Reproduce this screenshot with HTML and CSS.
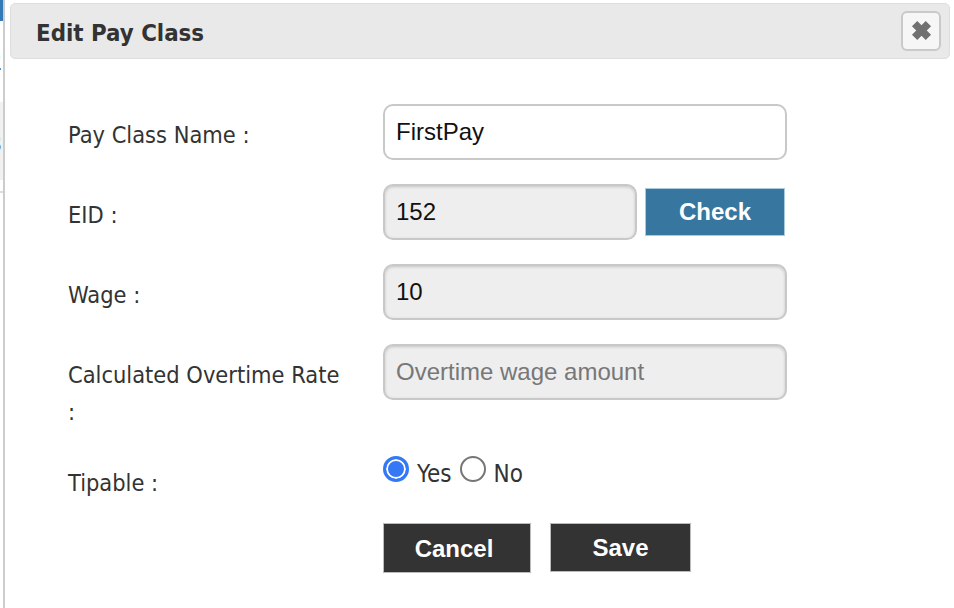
FILE: index.html
```html
<!DOCTYPE html>
<html lang="en">
<head>
<meta charset="utf-8">
<title>Edit Pay Class</title>
<link rel="stylesheet" href="styles.css">
</head>
<body>
<div class="backdrop">
  <div class="backdrop-bar"></div>
  <div class="backdrop-row one">2</div>
  <div class="backdrop-row two">3</div>
  <div class="backdrop-line"></div>
</div>
<section class="dialog">
  <header class="titlebar">
    <h1 class="title">Edit Pay Class</h1>
    <button class="close" type="button" aria-label="Close">
      <svg class="close-icon" viewBox="0 0 20 20" width="20" height="20"><path d="M4.5 4.5 15.5 15.5M15.5 4.5 4.5 15.5"/></svg>
    </button>
  </header>
  <form class="form">
    <label class="label">Pay Class Name :</label>
    <div class="field"><input class="input" type="text" value="FirstPay"></div>
    <label class="label">EID :</label>
    <div class="field eid">
      <input class="input short readonly" type="text" value="152" readonly>
      <button class="btn check" type="button">Check</button>
    </div>
    <label class="label">Wage :</label>
    <div class="field"><input class="input readonly" type="text" value="10" readonly></div>
    <label class="label">Calculated Overtime Rate :</label>
    <div class="field"><input class="input readonly" type="text" placeholder="Overtime wage amount" readonly></div>
    <label class="label tip">Tipable :</label>
    <div class="field radios">
      <input class="radio" type="radio" name="tip" checked><span class="radio-text">Yes</span>
      <input class="radio" type="radio" name="tip"><span class="radio-text">No</span>
    </div>
    <div></div>
    <div class="actions">
      <button class="btn dark cancel" type="button">Cancel</button>
      <button class="btn dark save" type="button">Save</button>
    </div>
  </form>
</section>
</body>
</html>
```
FILE: styles.css
```css
html, body { margin: 0; padding: 0; height: 100%; background: #fff; overflow: hidden; }
body { position: relative; width: 954px; height: 608px; font-family: "DejaVu Sans Condensed", "DejaVu Sans", sans-serif; color: #333; }
.backdrop { width: 3px; height: 608px; overflow: hidden; background: #fff; }
.backdrop-bar { height: 21px; background: #337ab7; }
.backdrop-row { font-family: "Noto Sans", sans-serif; font-size: 24px; width: 3px; text-indent: -12px; white-space: nowrap; }
.backdrop-row.one { height: 60px; padding-top: 21px; line-height: 38px; }
.backdrop-row.two { background: #f1f1f1; height: 78px; line-height: 82px; }
.backdrop-line { height: 2px; margin-top: 11px; background: #ddd; }
.dialog { position: absolute; left: 3px; top: 0; width: 951px; height: 608px; background: #fff; border-left: 2px solid #ccc; box-sizing: border-box; padding: 3px 4px 0 5px; }
.titlebar { display: flex; align-items: center; justify-content: space-between; height: 56px; box-sizing: border-box; background: #e9e9e9; border: 1px solid #dedede; border-radius: 5px; padding: 0 8px 0 25px; }
.title { margin: 0; padding-top: 3px; font-size: 23.8px; font-weight: 700; color: #333; }
.close { width: 40px; height: 40px; margin-bottom: 1px; padding: 0; display: flex; align-items: center; justify-content: center; background: #f6f6f6; border: 2px solid #c9c9c9; border-radius: 6px; }
.close-icon { stroke: #707070; stroke-width: 6; fill: none; width: 25px; height: 25px; }
.form { display: grid; grid-template-columns: 315px 404px; row-gap: 24px; align-items: start; padding: 45px 0 0 58px; }
.label { font-size: 23.4px; line-height: 37px; padding: 13px 32px 1px 0; color: #333; }
.label.tip { line-height: 24px; padding: 15px 0 0; }
.field { display: flex; align-items: center; gap: 8px; }
.input { width: 404px; height: 56px; box-sizing: border-box; border: 2px solid #c8c8c8; border-radius: 10px; padding: 0 11px; font-family: "Liberation Sans", Arial, sans-serif; font-size: 24px; color: #111; background: #fff; outline: none; }
.input.short { width: 254px; }
.input.readonly { background: #eee; box-shadow: inset 0 1px 3px rgba(0,0,0,.18); }
.input::placeholder { color: #777; opacity: 1; }
.btn { border: 1px solid #bbb; font-family: "Liberation Sans", Arial, sans-serif; font-weight: 700; font-size: 24px; color: #fff; padding: 0; }
.check { width: 140px; height: 48px; background: #37779f; border-color: #a9cbe0; }
.radios { gap: 0; height: 43px; align-items: flex-start; }
.radio { appearance: none; width: 26px; height: 26px; margin: 0; box-sizing: border-box; background: #fff; border: 2px solid #767676; border-radius: 50%; }
.radio:checked { border: 3px solid #3478f6; background: #3478f6; box-shadow: inset 0 0 0 2px #fff; }
.radio-text { font-size: 24px; line-height: 32px; padding: 0 8px 0 8px; margin-top: 2px; }
.actions { display: flex; gap: 19px; align-items: flex-start; }
.dark { background: #333; width: 148px; height: 50px; }
.cancel { padding-right: 6px; padding-top: 2px; }
.save { width: 141px; height: 49px; }
```
